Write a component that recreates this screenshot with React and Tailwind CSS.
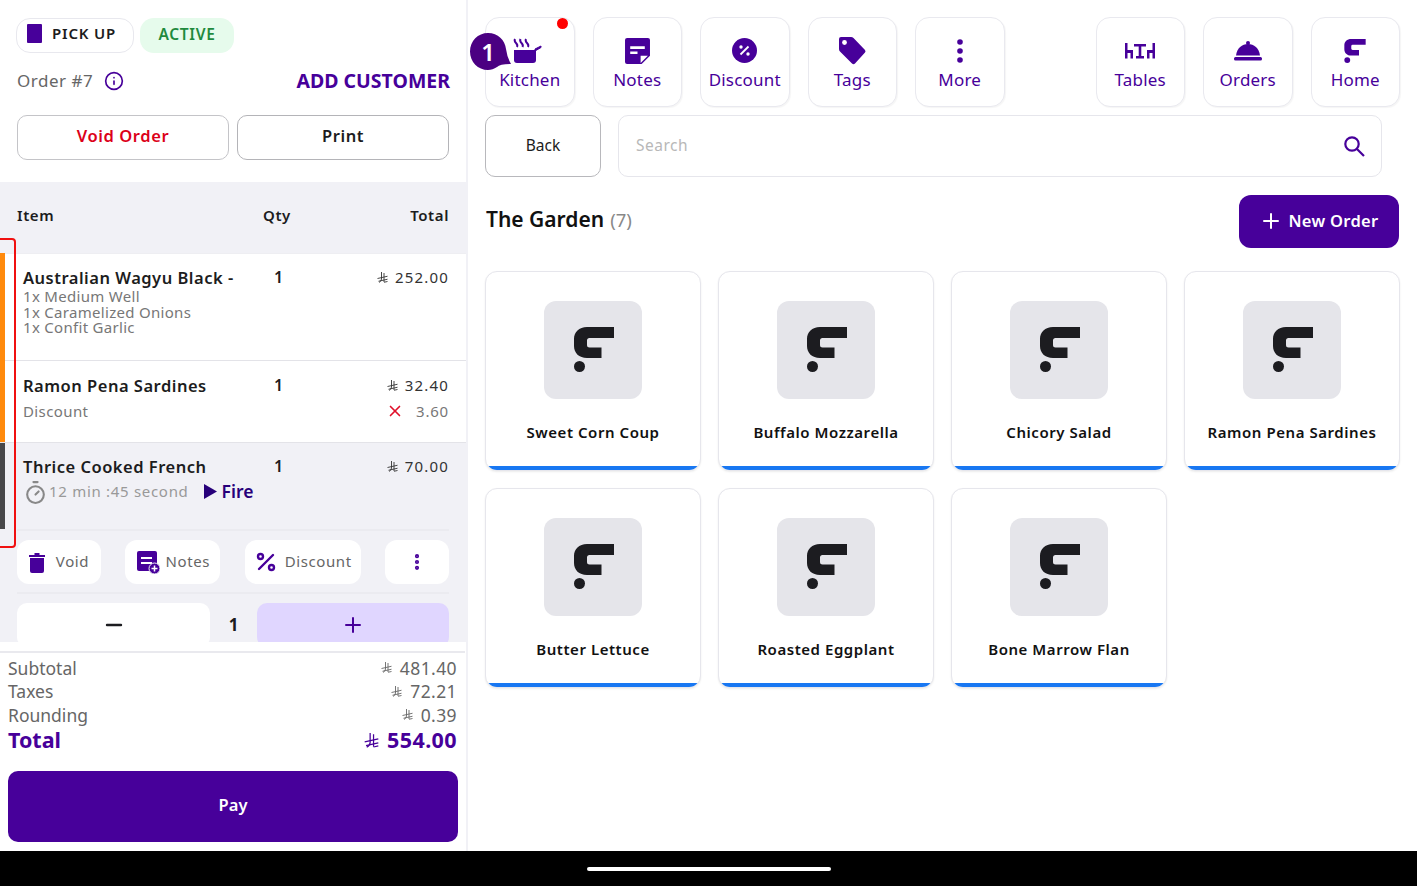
import { Plus, Minus, X, Percent, Timer, EllipsisVertical, Info } from "lucide-react";

const PRODUCTS = [
  "Sweet Corn Coup",
  "Buffalo Mozzarella",
  "Chicory Salad",
  "Ramon Pena Sardines",
  "Butter Lettuce",
  "Roasted Eggplant",
  "Bone Marrow Flan",
];

// Brand mark used on the product tiles and the Home button
const Logo = ({ className }) => (
  <svg viewBox="0 0 40 45" className={className} fill="currentColor">
    <path d="M40 0V11H15.5Q13 11 13 13.5V18Q13 20.500 15.500 20.500H27.500V31H13C5 31 0 26 0 19V12C0 5 5 0 13 0Z" />
    <circle cx="5.500" cy="39.500" r="5.500" />
  </svg>
);

// Riyal currency sign
const Riyal = ({ className = "w-[11px] h-[11px]" }) => (
  <svg viewBox="0 0 22 22" className={className} fill="none" stroke="currentColor" strokeWidth="1.800">
    <path d="M9 0V14Q9 18 4 21M14 2V20" />
    <path d="M1 13L21 8.500M3 18.500L21 14.500M14 20.500L21 19" />
  </svg>
);

const KitchenIcon = () => (
  <svg viewBox="0 0 30 26" className="w-[30px] h-[26px] -ml-[6px]" fill="#47009a">
    <path d="M2 12H24V22Q24 25 21 25H5Q2 25 2 22Z" />
    <path d="M23 13L29 9.500V8L23 11Z" stroke="#47009a" />
    <path d="M3 1Q2 3 4 5T5 9M8.500 1Q7.500 3 9.500 5T10.500 9M14 1Q13 3 15 5T16 9" fill="none" stroke="#47009a" strokeWidth="2" />
  </svg>
);

const NotesIcon = () => (
  <svg viewBox="0 0 24 25" className="w-[25px] h-[26px]">
    <path d="M2 0H22Q24 0 24 2V17L16 25H2Q0 25 0 23V2Q0 0 2 0Z" fill="#47009a" />
    <path d="M5 8H19V10.500H5ZM5 13H12V15.500H5Z" fill="#fff" />
    <path d="M15 17H22L15 24Z" fill="#fff" />
  </svg>
);

const DiscountIcon = () => (
  <svg viewBox="0 0 25 25" className="w-[25px] h-[25px]">
    <circle cx="12.500" cy="12.500" r="12.500" fill="#47009a" />
    <path d="M8.500 16.500L16.500 8.500" stroke="#fff" strokeWidth="1.800" />
    <circle cx="9" cy="9" r="1.700" fill="#fff" />
    <circle cx="16" cy="16" r="1.700" fill="#fff" />
  </svg>
);

const TagIcon = () => (
  <svg viewBox="0 0 27 28" className="w-[27px] h-[28px]">
    <path d="M2 0H12Q13.500 0 14.500 1L26 13Q27 14.500 26 15.500L16 26.500Q14.500 28 13 26.500L1 14.500Q0 13.500 0 12V2Q0 0 2 0Z" fill="#47009a" />
    <circle cx="5.500" cy="5.500" r="2.400" fill="#fff" />
  </svg>
);

const DotsIcon = () => (
  <svg viewBox="0 0 6 24" className="w-[6px] h-[24px]" fill="#47009a">
    <circle cx="3" cy="3" r="2.800" />
    <circle cx="3" cy="12" r="2.800" />
    <circle cx="3" cy="21" r="2.800" />
  </svg>
);

const TablesIcon = () => (
  <svg viewBox="0 0 30 16" className="w-[30px] h-[16px]" fill="#47009a">
    <path d="M0 0H2.500V7H8V15.500H5.500V10H2.500V15.500H0Z" />
    <path d="M30 0H27.500V7H22V15.500H24.500V10H27.500V15.500H30Z" />
    <path d="M9 1H21V3.500H16.300V13H19V15.500H11V13H13.700V3.500H9Z" />
  </svg>
);

const OrdersIcon = () => (
  <svg viewBox="0 0 28 20" className="w-[28px] h-[20px]" fill="#47009a">
    <circle cx="14" cy="2" r="2" />
    <path d="M2 14.500C3 7 8 3 14 3S25 7 26 14.500Z" />
    <rect x="0" y="16" width="28" height="3.500" rx="1.500" />
  </svg>
);

const SearchIcon = () => (
  <svg viewBox="0 0 21 21" className="w-[21px] h-[21px]" fill="none" stroke="#47009a" strokeWidth="2.200">
    <circle cx="8" cy="8" r="6.700" />
    <path d="M13 13L20 20" />
  </svg>
);

const TrashIcon = () => (
  <svg viewBox="0 0 16 21" className="w-[16px] h-[21px]" fill="#47009a">
    <path d="M0 3H5.500V1H10.500V3H16V5H0Z" />
    <path d="M1 6H15V19Q15 21 13 21H3Q1 21 1 19Z" />
  </svg>
);

const AddNoteIcon = () => (
  <svg viewBox="0 0 23 23" className="w-[23px] h-[23px]">
    <path d="M2 0H18Q20 0 20 2V20H2Q0 20 0 18V2Q0 0 2 0Z" fill="#47009a" />
    <path d="M4 6H15V8H4ZM4 11H15V13H4Z" fill="#fff" />
    <circle cx="17.500" cy="17.500" r="5.500" fill="#47009a" stroke="#f1f1f6" strokeWidth="1" />
    <path d="M14.500 17.500H20.500M17.500 14.500V20.500" stroke="#fff" strokeWidth="1.500" />
  </svg>
);

const ToolButton = ({ icon, label }) => (
  <button className="relative flex flex-col items-center justify-end w-[89.500px] h-[90px] pb-[15px] rounded-[14px] border border-[#e9e9ef] bg-white shadow-[1px_1px_1px_rgba(0,0,0,0.04)]">
    <span className="flex-1 flex items-center justify-center pt-[14px]">{icon}</span>
    <span className="text-[17px] leading-[22px] text-[#47009a] tracking-[0.2px]">{label}</span>
  </button>
);

const ActionButton = ({ icon, label, className }) => (
  <button className={`flex items-center justify-center h-[44px] rounded-[12px] bg-white ${className}`}>
    {icon}
    {label && <span className="text-[15px] leading-[20px] mb-[2px] text-[#666] tracking-[0.6px]">{label}</span>}
  </button>
);

const SummaryRow = ({ label, value }) => (
  <div className="flex justify-between items-center h-[23.500px] text-[17.500px] text-[#666]">
    <span>{label}</span>
    <span className="flex items-center gap-[8px] tracking-[0.4px]">
      <Riyal />
      {value}
    </span>
  </div>
);

const ProductCard = ({ name }) => (
  <div className="h-[200px] rounded-[12px] border border-[#e6e6ec] bg-white overflow-hidden flex flex-col items-center shadow-[0_1px_2px_rgba(0,0,0,0.08)]">
    <div className="mt-[29px] w-[98px] h-[98px] rounded-[12px] bg-[#e5e5ea] flex items-center justify-center">
      <Logo className="w-[40px] h-[45px] text-[#1c1c20] ml-[1px] mt-[-1px]" />
    </div>
    <div className="mt-[23px] text-[15px] leading-[20px] font-semibold text-[#111] tracking-[0.55px] whitespace-nowrap">{name}</div>
    <div className="mt-auto w-full h-[4px] bg-[#1877f2]" />
  </div>
);

export default function App() {
  return (
    <div className="relative w-[1417px] h-[886px] overflow-hidden bg-white font-['Noto_Sans',sans-serif] flex flex-col">
      <div className="flex h-[851px]">
        {/* Order panel */}
        <aside className="w-[468px] shrink-0 border-r-2 border-[#f1f1f6] flex flex-col">
          <div className="h-[182px] shrink-0 px-[16px] pt-[18px]">
            <div className="flex gap-[6px]">
              <div className="flex items-center w-[118px] h-[35px] rounded-[14px] border border-[#e8e8ee] pl-[10px] pb-[4px]">
                <span className="w-[15px] h-[19px] bg-[#47009a] rounded-[1px]" />
                <span className="ml-[10px] text-[15px] font-semibold text-[#1c1c20] tracking-[0.8px]">PICK UP</span>
              </div>
              <div className="flex items-center justify-center w-[94px] h-[35px] pb-[1px] rounded-[14px] bg-[#e6fbec] text-[15.500px] font-semibold text-[#1f8a3e] tracking-[0.7px]">
                ACTIVE
              </div>
            </div>
            <div className="flex items-center justify-between h-[24px] mt-[16px] pl-[1px]">
              <div className="flex items-center gap-[11px] text-[17px] text-[#666] tracking-[0.5px]">
                Order #7
                <Info className="w-[20px] h-[20px] text-[#47009a]" strokeWidth={2} />
              </div>
              <span className="text-[19.500px] font-bold text-[#47009a]">ADD CUSTOMER</span>
            </div>
            <div className="flex gap-[8px] mt-[22px] pl-[1px]">
              <button className="w-[212px] h-[45px] pb-[2px] rounded-[10px] border border-[#c4c4c8] text-[16.500px] font-semibold text-[#dc0019] tracking-[0.6px]">Void Order</button>
              <button className="w-[212px] h-[45px] pb-[2px] rounded-[10px] border border-[#b4b4b8] text-[16.500px] font-semibold text-[#1c1c20] tracking-[0.6px]">Print</button>
            </div>
          </div>

          <div className="h-[460px] shrink-0 bg-[#f1f1f6] overflow-hidden">
            <div className="grid grid-cols-[246px_1fr_1fr] items-center h-[71px] pb-[4px] pl-[17px] pr-[17px] text-[15px] font-semibold text-[#1c1c20] tracking-[0.6px]">
              <span>Item</span>
              <span>Qty</span>
              <span className="text-right">Total</span>
            </div>

            <div className="relative h-[108px] bg-white border-t border-[#eeeef2] border-b border-b-[#e3e3e8] pl-[23px] pr-[17px] pt-[13px]">
              <span className="absolute left-0 top-[-1px] bottom-[-1px] w-[5px] bg-[#ff8a0c]" />
              <div className="flex">
                <div className="w-[251px]">
                  <div className="text-[16.500px] leading-[22px] font-semibold text-[#1c1c20] tracking-[0.5px] whitespace-nowrap">Australian Wagyu Black -</div>
                  <div className="text-[15px] leading-[15.500px] text-[#777] tracking-[0.3px]">
                    <div>1x Medium Well</div>
                    <div>1x Caramelized Onions</div>
                    <div>1x Confit Garlic</div>
                  </div>
                </div>
                <span className="text-[16px] leading-[20px] font-semibold text-[#1c1c20]">1</span>
                <span className="ml-auto flex items-center h-[20px] gap-[7px] text-[15px] text-[#333] tracking-[1.200px]"><Riyal />252.00</span>
              </div>
            </div>

            <div className="relative h-[82px] bg-white border-b border-[#e3e3e8] pl-[23px] pr-[17px] pt-[14px]">
              <span className="absolute left-0 top-0 bottom-0 w-[5px] bg-[#ff8a0c]" />
              <div className="flex">
                <div className="w-[251px] text-[16.500px] leading-[22px] font-semibold text-[#1c1c20] tracking-[0.5px]">Ramon Pena Sardines</div>
                <span className="text-[16px] leading-[20px] font-semibold text-[#1c1c20]">1</span>
                <span className="ml-auto flex items-center h-[20px] gap-[7px] text-[15px] text-[#333] tracking-[1.200px]"><Riyal />32.40</span>
              </div>
              <div className="flex items-center justify-between mt-[3px] text-[15px] text-[#777] tracking-[0.4px]">
                <span>Discount</span>
                <span className="flex items-center gap-[12px] tracking-[0.8px]"><X className="w-[18px] h-[18px] text-[#e0102a]" strokeWidth={2.200} />3.60</span>
              </div>
            </div>

            <div className="relative h-[86px] pl-[23px] pr-[17px] pt-[13px]">
              <span className="absolute left-0 top-0 bottom-0 w-[5px] bg-[#48484a]" />
              <div className="flex">
                <div className="w-[251px] text-[16.500px] leading-[22px] font-semibold text-[#1c1c20] tracking-[0.5px]">Thrice Cooked French</div>
                <span className="text-[16px] leading-[20px] font-semibold text-[#1c1c20]">1</span>
                <span className="ml-auto flex items-center h-[20px] gap-[7px] text-[15px] text-[#333] tracking-[1.200px]"><Riyal />70.00</span>
              </div>
              <div className="flex items-center mt-[1px] h-[24px]">
                <Timer className="w-[25px] h-[25px] text-[#888] mt-[2px]" strokeWidth={2} />
                <span className="ml-[1px] text-[15px] text-[#999] tracking-[0.7px]">12 min :45 second</span>
                <svg viewBox="0 0 13 15" className="w-[13px] h-[15px] ml-[15px]" fill="#27007a"><path d="M0 0L13 7.500L0 15Z" /></svg>
                <span className="ml-[5px] text-[17.500px] font-semibold text-[#27007a]">Fire</span>
              </div>
            </div>

            <div className="ml-[17px] mr-[17px] border-t-2 border-[#ebebf0] pt-[9px] pb-[8px] border-b-2 border-b-[#ebebf0] flex justify-between">
              <ActionButton className="w-[84px] gap-[11px]" icon={<TrashIcon />} label="Void" />
              <ActionButton className="w-[95px] gap-[6px] pl-[1px]" icon={<AddNoteIcon />} label="Notes" />
              <ActionButton className="w-[116px] gap-[7px]" icon={<Percent className="w-[24px] h-[24px] text-[#47009a]" strokeWidth={2.400} />} label="Discount" />
              <ActionButton className="w-[64px]" icon={<EllipsisVertical className="w-[20px] h-[20px] text-[#47009a]" strokeWidth={3} />} />
            </div>

            <div className="flex items-center ml-[17px] mr-[17px] mt-[9px]">
              <button className="w-[193px] h-[44px] rounded-[10px] bg-white flex items-center justify-center">
                <Minus className="w-[24px] h-[24px] text-[#1c1c20]" strokeWidth={2.400} />
              </button>
              <span className="w-[47px] text-center text-[17px] font-bold text-[#1c1c20]">1</span>
              <button className="flex-1 h-[44px] rounded-[10px] bg-[#e0d6ff] flex items-center justify-center">
                <Plus className="w-[24px] h-[24px] text-[#47009a]" strokeWidth={2} />
              </button>
            </div>
          </div>

          <div className="flex-1 pt-[9px] flex flex-col">
            <div className="border-t-2 border-[#e9e9ee] px-[8px] pt-[3px] mr-[1px]">
              <SummaryRow label="Subtotal" value="481.40" />
              <SummaryRow label="Taxes" value="72.21" />
              <SummaryRow label="Rounding" value="0.39" />
              <div className="flex justify-between items-center h-[27px] text-[21.500px] font-bold text-[#47009a]">
                <span>Total</span>
                <span className="flex items-center gap-[8px] tracking-[0.4px]"><Riyal className="w-[15px] h-[15px]" />554.00</span>
              </div>
            </div>
            <button className="mx-[8px] mt-[17px] h-[71px] pb-[2px] rounded-[10px] bg-[#47009a] text-white text-[16.500px] font-semibold">Pay</button>
          </div>
        </aside>

        {/* Menu panel */}
        <main className="flex-1 pl-[17px] pr-[17px] pt-[17px]">
          <div className="flex justify-between">
            <div className="flex gap-[18px]">
              <ToolButton icon={<KitchenIcon />} label="Kitchen" />
              <ToolButton icon={<NotesIcon />} label="Notes" />
              <ToolButton icon={<DiscountIcon />} label="Discount" />
              <ToolButton icon={<TagIcon />} label="Tags" />
              <ToolButton icon={<DotsIcon />} label="More" />
            </div>
            <div className="flex gap-[18px]">
              <ToolButton icon={<TablesIcon />} label="Tables" />
              <ToolButton icon={<OrdersIcon />} label="Orders" />
              <ToolButton icon={<Logo className="w-[22px] h-[24px] text-[#47009a]" />} label="Home" />
            </div>
          </div>

          <div className="flex gap-[17px] mt-[8px] mr-[18px]">
            <button className="w-[116px] h-[62px] rounded-[10px] border border-[#b8b8bc] text-[15.500px] text-[#1c1c20]">Back</button>
            <div className="flex-1 h-[62px] rounded-[10px] border border-[#e6e6ec] flex items-center justify-between pl-[17px] pr-[16px]">
              <span className="text-[15.500px] text-[#b8b8b8] tracking-[0.5px]">Search</span>
              <SearchIcon />
            </div>
          </div>

          <div className="flex items-center justify-between mt-[18px] mr-[1px] h-[53px]">
            <div className="flex items-baseline gap-[6px] pl-[1px] pb-[3px]">
              <span className="text-[21px] font-semibold text-[#111]">The Garden</span>
              <span className="text-[18.500px] text-[#888]">(7)</span>
            </div>
            <button className="w-[160px] h-[53px] pb-[1px] rounded-[12px] bg-[#47009a] text-white flex items-center justify-center gap-[5px] text-[16.500px] font-semibold tracking-[0.3px]">
              <Plus className="w-[24px] h-[24px]" strokeWidth={2} />
              New Order
            </button>
          </div>

          <div className="grid grid-cols-4 gap-x-[17px] gap-y-[17px] mt-[23px]">
            {PRODUCTS.map((name) => (
              <ProductCard key={name} name={name} />
            ))}
          </div>
        </main>
      </div>

      {/* Android nav bar */}
      <div className="h-[35px] bg-black flex items-center justify-center">
        <div className="w-[244px] h-[4px] mt-[1px] rounded-full bg-white" />
      </div>

      {/* Annotations over the screen */}
      <div className="absolute left-[-6px] top-[238px] w-[22px] h-[310px] border-2 border-[#f01010] rounded-[4px]" />
      <span className="absolute left-[557px] top-[18px] w-[11px] h-[11px] rounded-full bg-[#ff0000]" />
      <div className="absolute left-[470px] top-[33px] w-[41px] h-[38px]">
        <svg viewBox="0 0 41 38" className="absolute inset-0 w-[41px] h-[38px]">
          <path d="M18 0C28 0 35 7 36 16Q37 24 41 31Q30 31 27 34C24 36 21 37 18 37C8 37 0 29 0 18.500S8 0 18 0Z" fill="#4b0082" />
        </svg>
        <span className="absolute left-0 top-0 w-[36px] h-[37px] flex items-center justify-center text-white text-[24px] font-semibold">1</span>
      </div>
    </div>
  );
}
